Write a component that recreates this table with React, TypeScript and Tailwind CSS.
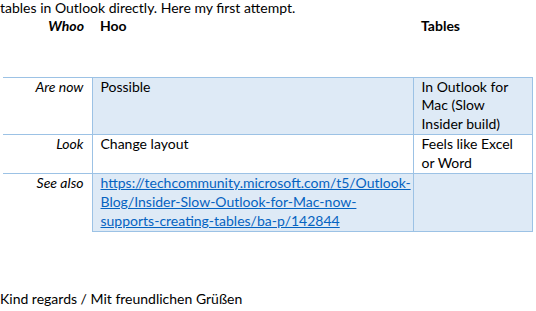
import React from 'react';

const rows = [
  {
    label: 'Are now',
    mid: <>Possible</>,
    right: <>In Outlook for<br />Mac (Slow<br />Insider build)</>,
    shaded: true,
  },
  {
    label: 'Look',
    mid: <>Change layout</>,
    right: <>Feels like Excel<br />or Word</>,
    shaded: false,
  },
  {
    label: 'See also',
    mid: (
      <a href="#" className="text-[#0563c1] underline">
        https://techcommunity.microsoft.com/t5/Outlook-<br />
        Blog/Insider-Slow-Outlook-for-Mac-now-<br />
        supports-creating-tables/ba-p/142844
      </a>
    ),
    right: null,
    shaded: true,
  },
];

const App: React.FC = () => {
  return (
    <div className="w-[536px] h-[311px] overflow-hidden bg-white text-[14px] leading-[19px] text-black font-['Lato','Liberation_Sans',sans-serif]">
      <p className="mt-[-2px]">tables in Outlook directly. Here my first attempt.</p>

      <table className="ml-[3px] w-[529px] border-collapse table-fixed leading-[18.9px]">
        <colgroup>
          <col className="w-[89px]" />
          <col className="w-[321px]" />
          <col className="w-[119px]" />
        </colgroup>
        <thead>
          <tr className="h-[60px] align-top">
            <th className="pr-2 text-right italic font-bold">Whoo</th>
            <th className="pl-2 text-left font-bold">Hoo</th>
            <th className="pl-2 text-left font-bold">Tables</th>
          </tr>
        </thead>
        <tbody>
          {rows.map(r => (
            <tr key={r.label} className="align-top">
              <td className="pr-2 text-right italic border-t border-[#9cc2e5]">{r.label}</td>
              <td className={`pl-2 border border-[#9cc2e5] ${r.shaded ? 'bg-[#deeaf6]' : 'bg-white'}`}>{r.mid}</td>
              <td className={`pl-2 border border-[#9cc2e5] ${r.shaded ? 'bg-[#deeaf6]' : 'bg-white'}`}>{r.right}</td>
            </tr>
          ))}
        </tbody>
      </table>

      <p className="mt-[57px]">Kind regards / Mit freundlichen Grüßen</p>
    </div>
  );
};

export default App;
